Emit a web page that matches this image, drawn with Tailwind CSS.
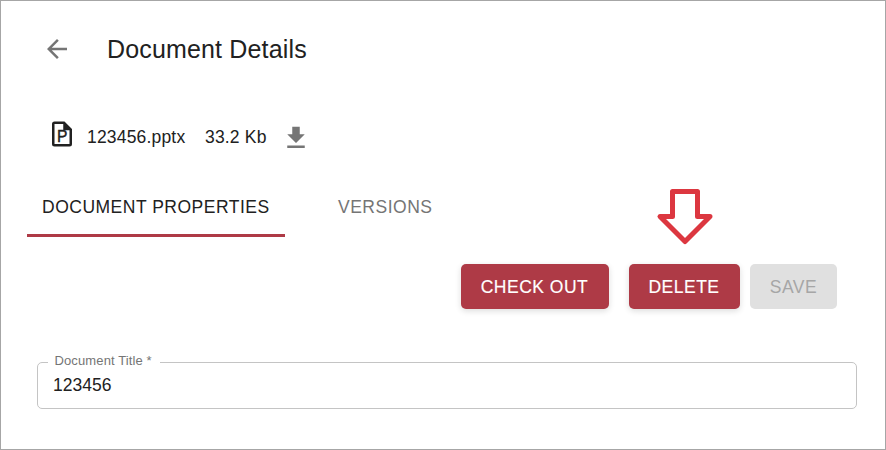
<!DOCTYPE html>
<html lang="en">
<head>
<meta charset="utf-8">
<title>Document Details</title>
<script src="https://cdn.jsdelivr.net/npm/@tailwindcss/browser@4"></script>
</head>
<body class="bg-white">
<main class="flex h-[450px] w-[886px] flex-col overflow-hidden border border-[#a6a6a6] bg-white font-['Liberation_Sans',Arial,sans-serif] text-[17.5px] text-[#212121]">
  <header class="mt-[33px] flex h-[30px] items-center pl-[41px]">
    <button class="size-[30px] text-[#757575]" aria-label="Back">
      <svg class="size-[30px]" viewBox="0 0 24 24" fill="currentColor"><path d="M20 11H7.83l5.59-5.59L12 4l-8 8 8 8 1.41-1.41L7.83 13H20v-2z"/></svg>
    </button>
    <h1 class="ml-[35px] text-[25px] leading-[30px] tracking-[0.16px] whitespace-nowrap">Document Details</h1>
  </header>

  <section class="mt-[55px] flex h-[36px] items-center pl-[46px] whitespace-nowrap">
    <svg class="mb-[6px] size-[30px]" viewBox="0 0 24 24">
      <path fill="#212121" fill-rule="evenodd" d="M6 2h8l6 6v12a2 2 0 0 1-2 2H6a2 2 0 0 1-2-2V4a2 2 0 0 1 2-2zm0 2v16h12V9h-5V4H6z"/>
      <text x="8" y="18.3" font-size="12.5" font-family="Liberation Sans" fill="#212121" stroke="#212121" stroke-width=".3">P</text>
    </svg>
    <span class="ml-[10px] w-[118px] tracking-[0.18px]">123456.pptx</span>
    <span class="w-[76px] tracking-[0.18px]">33.2 Kb</span>
    <svg class="mt-[2px] size-[30px] text-[#757575]" viewBox="0 0 24 24" fill="currentColor"><path d="M19 9h-4V3H9v6H5l7 7 7-7zM5 18v2h14v-2H5z"/></svg>
  </section>

  <nav class="mt-[22px] flex h-[60px] pl-[26px] tracking-[0.5px] whitespace-nowrap">
    <div class="flex w-[258px] items-center border-b-3 border-[#ae3a46] pt-[4px] pl-[15px]">DOCUMENT PROPERTIES</div>
    <div class="ml-[53px] flex items-center border-b-3 border-transparent pt-[4px] text-[#757575]">VERSIONS</div>
  </nav>

  <div class="mt-[27px] flex h-[45px] pl-[460px] tracking-[0.5px] whitespace-nowrap text-white">
    <button class="w-[148px] rounded-[5px] bg-[#ae3a46] pt-[2px] pr-[1px] shadow-[0_2px_6px_rgba(0,0,0,0.14)] [-webkit-text-stroke:0.15px_white]">CHECK OUT</button>
    <button class="ml-[20px] w-[111px] rounded-[5px] bg-[#ae3a46] pt-[2px] pr-[1px] shadow-[0_2px_6px_rgba(0,0,0,0.14)] [-webkit-text-stroke:0.15px_white]">DELETE</button>
    <button class="ml-[10px] w-[87px] rounded-[5px] bg-[#e0e0e0] pt-[2px] text-[#a6a6a6]" disabled>SAVE</button>
  </div>

  <div class="relative mt-[53px] ml-[36px] flex h-[47px] w-[820px] items-center rounded-[5px] border border-[#c4c4c4] pl-[15px]">
    <label class="absolute -top-[11px] left-[10px] w-[112px] bg-white pl-[6.5px] text-[13px] leading-[18px] tracking-[0.12px] whitespace-nowrap text-[#757575]">Document Title *</label>
    <span>123456</span>
  </div>

  <svg class="absolute top-[186px] left-[654px] h-[60px] w-[62px]" viewBox="0 0 62 60" fill="none" stroke="#dc3740" stroke-width="5" stroke-linejoin="round"><path d="M18.5 5.5h25v25H56L31 55.5 6 30.5h12.5z"/></svg>
</main>
</body>
</html>
